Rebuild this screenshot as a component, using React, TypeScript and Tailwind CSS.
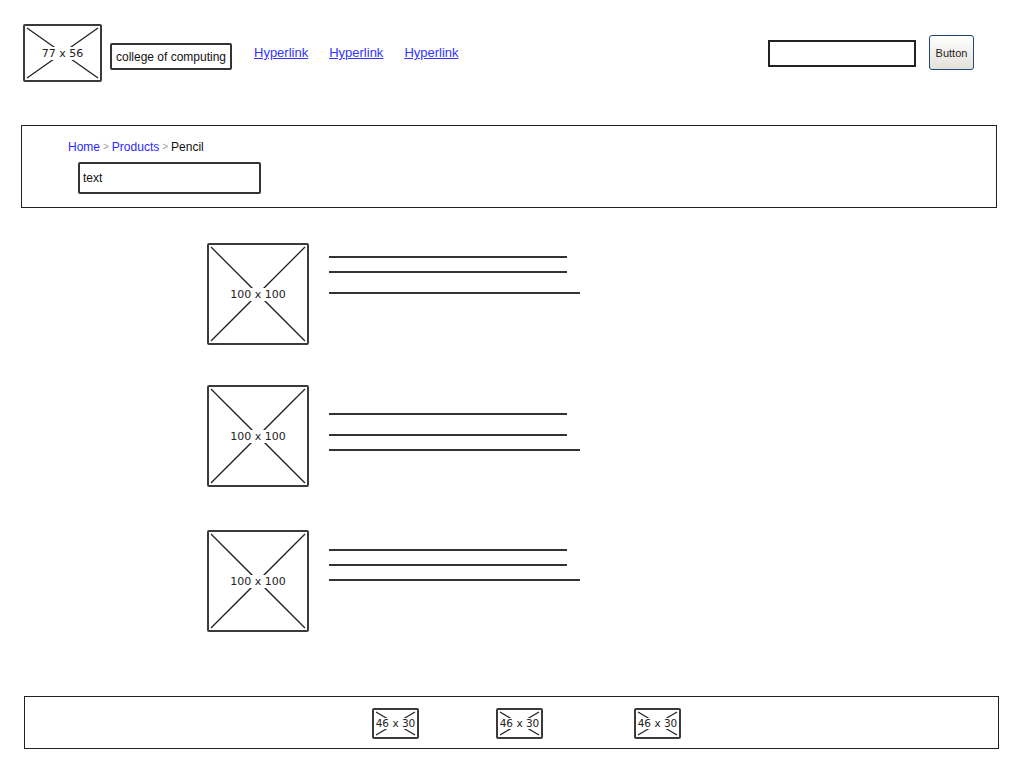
import React from "react";

const font = { fontFamily: '"Liberation Sans", Arial, sans-serif' };
const labelFont = { fontFamily: '"DejaVu Sans", "Liberation Sans", sans-serif' };

function Placeholder({ w, h, label, small }: { w: number; h: number; label: string; small?: boolean }) {
  return (
    <div
      className="relative shrink-0 border-2 border-[#3a3a3a] rounded-[2px] bg-white"
      style={{ width: w, height: h }}
    >
      <svg className="absolute inset-0 w-full h-full" viewBox={`0 0 ${w - 4} ${h - 4}`} preserveAspectRatio="none">
        <line x1="2" y1="2" x2={w - 6} y2={h - 6} stroke="#222" strokeWidth="1.3" />
        <line x1={w - 6} y1="2" x2="2" y2={h - 6} stroke="#222" strokeWidth="1.3" />
      </svg>
      <div className="absolute inset-0 flex items-center justify-center">
        <span
          className={`bg-white text-[#222] leading-none ${small ? "text-[10.5px] px-0" : "text-[11px] px-[3px] py-[1px]"}`}
          style={labelFont}
        >
          {label}
        </span>
      </div>
    </div>
  );
}

function Line({ w, mt }: { w: number; mt: number }) {
  return <div className="h-[2px] bg-[#333]" style={{ width: w, marginTop: mt }} />;
}

function Row({ mt, gaps }: { mt: number; gaps: number[] }) {
  return (
    <div className="flex ml-[207px]" style={{ marginTop: mt }}>
      <Placeholder w={102} h={102} label="100 x 100" />
      <div className="ml-[20px] flex flex-col">
        <Line w={238} mt={gaps[0]} />
        <Line w={238} mt={gaps[1]} />
        <Line w={251} mt={gaps[2]} />
      </div>
    </div>
  );
}

export default function App() {
  return (
    <div className="w-[1024px] h-[768px] bg-white overflow-hidden" style={font}>
      {/* Header */}
      <div className="flex items-start pt-[24px] pl-[23px]">
        <Placeholder w={79} h={58} label="77 x 56" />
        <div className="ml-[8px] mt-[19px] h-[27px] w-[122px] border-2 border-[#333] rounded-[2px] flex items-center justify-center text-[12px] text-[#111] whitespace-nowrap">
          college of computing
        </div>
        <div className="ml-[22px] mt-[21px] flex gap-[21px] text-[13px] leading-[16px] text-[#3333ff] underline">
          <span>Hyperlink</span>
          <span>Hyperlink</span>
          <span>Hyperlink</span>
        </div>
        <div className="ml-auto mt-[16px] w-[148px] h-[27px] border-2 border-[#222] bg-white" />
        <button className="ml-[13px] mr-[50px] mt-[11px] w-[45px] h-[35px] rounded-[3px] border border-[#1f4a78] bg-gradient-to-b from-white to-[#e4e1da] text-[11px] leading-none text-[#222] flex items-center justify-center pt-[2px]">
          Button
        </button>
      </div>

      {/* Breadcrumb panel */}
      <div className="ml-[21px] mt-[43px] w-[976px] h-[83px] border-[1.5px] border-[#222] pt-[13px]">
        <div className="ml-[46px] text-[12px] leading-[16px] flex items-center gap-[3px]">
          <span className="text-[#2a2aff]">Home</span>
          <span className="text-[#999] text-[10px]">&gt;</span>
          <span className="text-[#2a2aff]">Products</span>
          <span className="text-[#999] text-[10px]">&gt;</span>
          <span className="text-[#111]">Pencil</span>
        </div>
        <div className="ml-[56px] mt-[7px] w-[183px] h-[32px] border-2 border-[#333] rounded-[2px] flex items-center pl-[3px] text-[12px] text-[#111]">
          text
        </div>
      </div>

      {/* Rows */}
      <Row mt={35} gaps={[13, 13, 19]} />
      <Row mt={40} gaps={[28, 19, 13]} />
      <Row mt={43} gaps={[19, 13, 13]} />

      {/* Footer */}
      <div className="ml-[24px] mt-[64px] w-[975px] h-[53px] border border-[#222] flex items-start pt-[11px]">
        <div className="ml-[347px]">
          <Placeholder w={47} h={31} label="46 x 30" small />
        </div>
        <div className="ml-[77px]">
          <Placeholder w={47} h={31} label="46 x 30" small />
        </div>
        <div className="ml-[91px]">
          <Placeholder w={47} h={31} label="46 x 30" small />
        </div>
      </div>
    </div>
  );
}
